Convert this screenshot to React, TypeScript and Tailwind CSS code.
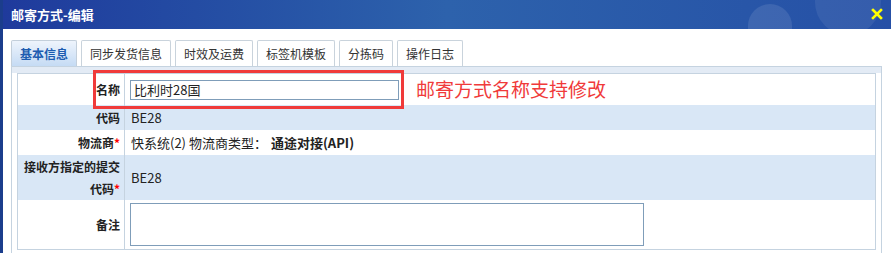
import React from 'react';

const tabs = ['基本信息', '同步发货信息', '时效及运费', '标签机模板', '分拣码', '操作日志'];

const Label: React.FC<{ children: React.ReactNode; required?: boolean }> = ({ children, required }) => (
  <div className="w-[107px] shrink-0 border-r border-[#c5d3e0] flex items-center justify-end pr-[4px] text-right font-bold text-[12px] leading-[22px] text-[#222]">
    <span>
      {children}
      {required && <span className="text-[#ff0000]">*</span>}
    </span>
  </div>
);

export default function App() {
  return (
    <div
      className="w-[891px] h-[253px] overflow-hidden bg-white border-l-[3px] border-[#1b3d8c] text-[12px] text-[#222]"
      style={{ fontFamily: '"Noto Sans CJK SC", "Noto Sans", sans-serif' }}
    >
      {/* title bar */}
      <div className="relative h-[29px] overflow-hidden bg-gradient-to-r from-[#1f3a9c] via-[#2d62ac] to-[#2650a6] flex items-center pl-[8px]">
        <div className="absolute left-[745px] top-[4px] w-[44px] h-[60px] rounded-full bg-white/10" />
        <div className="absolute left-[812px] top-[-40px] w-[66px] h-[75px] rounded-full bg-white/[0.07]" />
        <span className="relative text-white font-bold text-[13px]">邮寄方式-编辑</span>
        <svg className="absolute right-[8px] top-[8px]" width="12" height="12" viewBox="0 0 12 12">
          <path d="M2 2 L10 10 M10 2 L2 10" stroke="#ffff00" strokeWidth="2.6" strokeLinecap="square" />
        </svg>
      </div>

      {/* tabs */}
      <div className="flex gap-[4px] pl-[8px] pt-[11px]">
        {tabs.map((t, i) => (
          <div
            key={t}
            className={
              i === 0
                ? 'h-[26px] px-[8px] flex items-center border border-b-0 border-[#c3cfdb] rounded-t-[2px] bg-gradient-to-b from-[#eef4fc] to-[#c5dbf4] text-[#1d5cb0] font-bold text-[12px]'
                : 'h-[26px] px-[8px] flex items-center border border-b-0 border-[#c9d3dc] rounded-t-[2px] bg-white text-[#333] text-[12px]'
            }
          >
            {t}
          </div>
        ))}
      </div>

      {/* panel */}
      <div className="ml-[8px] w-[871px] border border-[#c5d3e0] border-b-0 h-[200px] bg-white">
        <div className="h-[6px] bg-[#e3ebf5]" />
        <div className="ml-[5px] w-[859px] border border-[#c5d3e0] flex flex-col">
          {/* 名称 */}
          <div className="relative h-[31px] flex bg-white">
            <Label>名称</Label>
            <div className="flex items-center pl-[5px]">
              <div className="w-[269px] h-[20px] border border-[#7f9db9] flex items-center pl-[3px] text-[13px]">比利时28国</div>
            </div>
            <div className="absolute left-[75px] top-[-4px] w-[311px] h-[39px] border-[3px] border-[#f03a3a]" />
            <div className="absolute left-[398px] top-[2px] text-[19px] text-[#f03a3a] leading-[26px]">邮寄方式名称支持修改</div>
          </div>
          {/* 代码 */}
          <div className="h-[25px] flex bg-[#d9e7f6]">
            <Label>代码</Label>
            <div className="flex items-center pl-[6px] text-[13px]">BE28</div>
          </div>
          {/* 物流商 */}
          <div className="h-[25px] flex bg-white">
            <Label required>物流商</Label>
            <div className="flex items-center pl-[6px] text-[13px]">
              快系统(2) 物流商类型：
              <span className="ml-[4px] font-bold">通途对接(API)</span>
            </div>
          </div>
          {/* 提交代码 */}
          <div className="h-[45px] flex bg-[#d9e7f6]">
            <Label required>
              接收方指定的提交
              <br />
              代码
            </Label>
            <div className="flex items-center pl-[6px] text-[13px]">BE28</div>
          </div>
          {/* 备注 */}
          <div className="h-[49px] flex bg-white">
            <Label>备注</Label>
            <div className="pl-[5px] pt-[3px]">
              <div className="w-[514px] h-[43px] border border-[#7f9db9] bg-white" />
            </div>
          </div>
        </div>
      </div>
    </div>
  );
}
